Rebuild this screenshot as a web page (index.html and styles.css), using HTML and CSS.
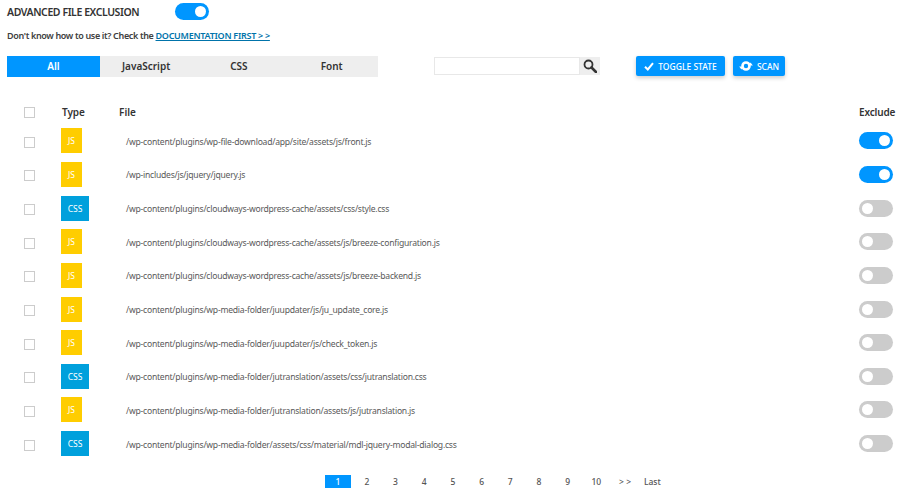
FILE: index.html
```html
<!DOCTYPE html>
<html lang="en">
<head>
<meta charset="utf-8">
<title>Advanced File Exclusion</title>
<link rel="stylesheet" href="styles.css">
</head>
<body>
<main class="page">
  <div class="title-row">
    <h1 class="title">ADVANCED FILE EXCLUSION</h1>
    <span class="switch on"></span>
  </div>
  <p class="doc">Don't know how to use it? Check the <a href="#">DOCUMENTATION FIRST &gt; &gt;</a></p>
  <div class="toolbar">
    <div class="tabs">
      <span class="tab active">All</span>
      <span class="tab">JavaScript</span>
      <span class="tab">CSS</span>
      <span class="tab">Font</span>
    </div>
    <div class="search">
      <span class="search-input"></span>
      <span class="search-btn">
        <svg width="14" height="14" viewBox="0 0 14 14"><circle cx="5.5" cy="5.5" r="4" fill="none" stroke="#333" stroke-width="1.8"/><path d="M8.5 8.5L13 13" stroke="#333" stroke-width="2.6" stroke-linecap="round"/></svg>
      </span>
    </div>
    <span class="btn btn-toggle">
      <svg width="10" height="9" viewBox="0 0 10 9"><path d="M1 4.8L3.8 7.5L9 1.2" fill="none" stroke="#fff" stroke-width="2"/></svg>
      TOGGLE STATE
    </span>
    <span class="btn btn-scan">
      <svg width="14" height="12" viewBox="0 0 14 12"><circle cx="7" cy="6" r="3.5" fill="none" stroke="#fff" stroke-width="2.6"/><path d="M9.4 5.6L13.8 5.6L11.6 2.4Z" fill="#fff"/><path d="M4.6 6.4L0.2 6.4L2.4 9.6Z" fill="#fff"/></svg>
      SCAN
    </span>
  </div>
  <table class="files">
    <thead>
      <tr>
        <th class="c-check"><span class="check head"></span></th>
        <th class="c-type head-type">Type</th>
        <th class="c-file">File</th>
        <th class="c-excl head-excl">Exclude</th>
      </tr>
    </thead>
    <tbody>
      <tr><td class="c-check"><span class="check"></span></td><td class="c-type"><span class="badge js">JS</span></td><td class="c-path">/wp-content/plugins/wp-file-download/app/site/assets/js/front.js</td><td class="c-excl"><span class="switch on"></span></td></tr>
      <tr><td class="c-check"><span class="check"></span></td><td class="c-type"><span class="badge js">JS</span></td><td class="c-path">/wp-includes/js/jquery/jquery.js</td><td class="c-excl"><span class="switch on"></span></td></tr>
      <tr><td class="c-check"><span class="check"></span></td><td class="c-type"><span class="badge css">CSS</span></td><td class="c-path">/wp-content/plugins/cloudways-wordpress-cache/assets/css/style.css</td><td class="c-excl"><span class="switch"></span></td></tr>
      <tr><td class="c-check"><span class="check"></span></td><td class="c-type"><span class="badge js">JS</span></td><td class="c-path">/wp-content/plugins/cloudways-wordpress-cache/assets/js/breeze-configuration.js</td><td class="c-excl"><span class="switch"></span></td></tr>
      <tr><td class="c-check"><span class="check"></span></td><td class="c-type"><span class="badge js">JS</span></td><td class="c-path">/wp-content/plugins/cloudways-wordpress-cache/assets/js/breeze-backend.js</td><td class="c-excl"><span class="switch"></span></td></tr>
      <tr><td class="c-check"><span class="check"></span></td><td class="c-type"><span class="badge js">JS</span></td><td class="c-path">/wp-content/plugins/wp-media-folder/juupdater/js/ju_update_core.js</td><td class="c-excl"><span class="switch"></span></td></tr>
      <tr><td class="c-check"><span class="check"></span></td><td class="c-type"><span class="badge js">JS</span></td><td class="c-path">/wp-content/plugins/wp-media-folder/juupdater/js/check_token.js</td><td class="c-excl"><span class="switch"></span></td></tr>
      <tr><td class="c-check"><span class="check"></span></td><td class="c-type"><span class="badge css">CSS</span></td><td class="c-path">/wp-content/plugins/wp-media-folder/jutranslation/assets/css/jutranslation.css</td><td class="c-excl"><span class="switch"></span></td></tr>
      <tr><td class="c-check"><span class="check"></span></td><td class="c-type"><span class="badge js">JS</span></td><td class="c-path">/wp-content/plugins/wp-media-folder/jutranslation/assets/js/jutranslation.js</td><td class="c-excl"><span class="switch"></span></td></tr>
      <tr><td class="c-check"><span class="check"></span></td><td class="c-type"><span class="badge css">CSS</span></td><td class="c-path">/wp-content/plugins/wp-media-folder/assets/css/material/mdl-jquery-modal-dialog.css</td><td class="c-excl"><span class="switch"></span></td></tr>
    </tbody>
  </table>
  <nav class="pager">
    <span class="page-link current">1</span>
    <span class="page-link">2</span>
    <span class="page-link">3</span>
    <span class="page-link">4</span>
    <span class="page-link">5</span>
    <span class="page-link">6</span>
    <span class="page-link">7</span>
    <span class="page-link">8</span>
    <span class="page-link">9</span>
    <span class="page-link">10</span>
    <span class="page-link">&gt; &gt;</span>
    <span class="page-link last">Last</span>
  </nav>
</main>
</body>
</html>
```

FILE: styles.css
```css
* { box-sizing: border-box; }
html, body { margin: 0; padding: 0; background: #fff; }
body {
  width: 920px;
  height: 499px;
  overflow: hidden;
  font-family: "Noto Sans", "Open Sans", sans-serif;
  color: #404040;
}
.page { padding: 3px 0 0 7px; }
.title-row { display: flex; align-items: center; height: 17px; }
.title {
  width: 168px;
  margin: 0;
  padding-top: 1px;
  font-size: 10.5px;
  line-height: 17px;
  letter-spacing: -0.42px;
  font-weight: 600;
  color: #333;
  white-space: nowrap;
}
.doc {
  margin: 9px 0 0;
  font-size: 9px;
  line-height: 13px;
  letter-spacing: -0.35px;
  font-weight: 600;
  color: #404040;
  white-space: nowrap;
}
.doc a { color: #0073aa; letter-spacing: -0.27px; text-decoration: underline; }

.switch {
  display: block;
  position: relative;
  width: 34px;
  height: 17px;
  border-radius: 9px;
  background: #ccc;
}
.switch::after {
  content: "";
  position: absolute;
  top: 3px;
  left: 3px;
  width: 11px;
  height: 11px;
  border-radius: 50%;
  background: #fff;
}
.switch.on { background: #0096ff; }
.switch.on::after { left: 20px; }

.toolbar { display: flex; align-items: flex-start; margin-top: 14px; height: 21px; }
.tabs { display: flex; width: 371px; height: 21px; background: #eee; }
.tab {
  flex: 1;
  font-size: 10px;
  line-height: 21px;
  font-weight: 600;
  text-align: center;
  color: #333;
}
.tab.active { background: #0096ff; color: #fff; }
.search { display: flex; margin: 1px 0 0 56px; height: 18px; }
.search-input { width: 146px; border: 1px solid #e8e8e8; background: #fff; }
.search-btn { display: flex; align-items: center; justify-content: center; width: 20px; background: #eee; }
.btn {
  display: flex;
  align-items: center;
  justify-content: center;
  gap: 4px;
  height: 20px;
  border-radius: 2px;
  background: #0096ff;
  color: #fff;
  font-size: 8.5px;
  font-weight: 500;
  box-shadow: 0 2px 4px rgba(0, 0, 0, .2);
  white-space: nowrap;
}
.btn-toggle { width: 89px; margin-left: 36px; }
.btn-scan { width: 52px; margin-left: 8px; }

.files {
  width: 888px;
  margin: 22px 0 0 0;
  border-collapse: collapse;
  table-layout: fixed;
}
.files th, .files td { padding: 0; }
.files thead tr { height: 25px; }
.files tbody tr { height: 33.65px; }
.files th { font-size: 10px; font-weight: 600; color: #333; text-align: left; }
.files th.head-type { padding-left: 1px; letter-spacing: -0.1px; }
.files th.head-excl { letter-spacing: -0.15px; white-space: nowrap; }
.c-check { width: 54px; padding-left: 17px !important; }
.c-type { width: 58px; }
.c-excl { width: 36px; padding-left: 0; }
.c-path {
  font-size: 8.6px;
  letter-spacing: -0.24px;
  color: #595959;
  padding: 2px 0 0 7px !important;
  white-space: nowrap;
}
.check {
  display: block;
  width: 11px;
  height: 11px;
  margin-top: 3px;
  border: 1px solid #ccc;
  background: #fff;
}
.check.head { margin-top: 2px; }
.badge {
  display: block;
  height: 25px;
  font-size: 8.5px;
  line-height: 25px;
  text-align: center;
  color: #fff;
}
.badge.js { width: 21px; background: #ffcd00; }
.badge.css { width: 28px; background: #00a0dc; }

.pager { display: flex; align-items: center; margin: 15px 0 0 318px; height: 13px; }
.page-link {
  width: 28.7px;
  font-size: 8.5px;
  line-height: 13px;
  font-weight: 500;
  text-align: center;
  color: #555;
}
.page-link.current { width: 26px; margin-right: 1.5px; background: #0096ff; color: #fff; }
.page-link.last { width: 26px; }
```
